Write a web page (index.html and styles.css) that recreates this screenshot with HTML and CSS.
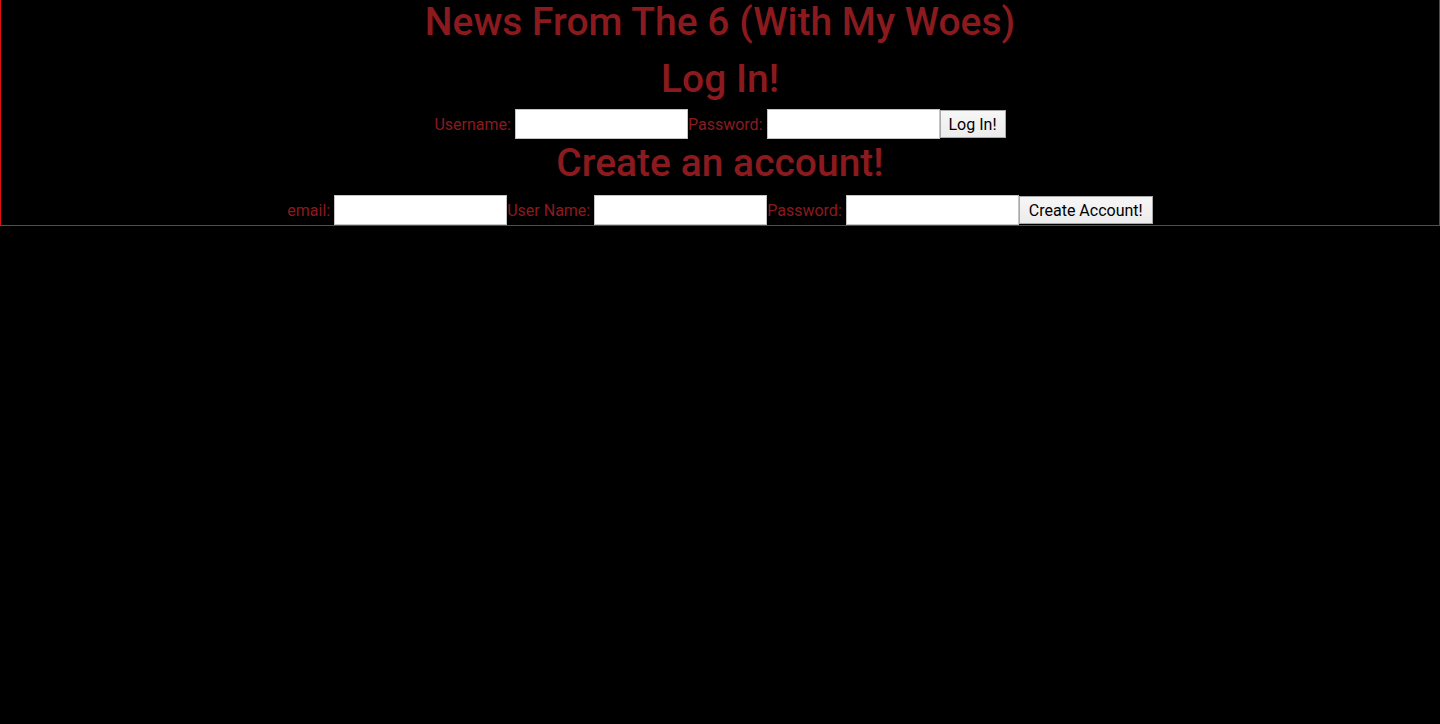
FILE: index.html
```html
<!DOCTYPE html>
<html lang="en">
<head>
<meta charset="utf-8">
<title>News From The 6 (With My Woes)</title>
<link rel="stylesheet" href="styles.css">
</head>
<body>
<div class="page">
  <h1 class="title">News From The 6 (With My Woes)</h1>
  <h2 class="heading heading-login">Log In!</h2>
  <form class="form-row row-login">
    <label class="label" for="u">Username:</label>
    <input class="field" id="u" type="text">
    <label class="label" for="p">Password:</label>
    <input class="field" id="p" type="password">
    <button class="btn" type="button">Log In!</button>
  </form>
  <h2 class="heading heading-create">Create an account!</h2>
  <form class="form-row row-create">
    <label class="label" for="e">email:</label>
    <input class="field" id="e" type="text">
    <label class="label" for="un">User Name:</label>
    <input class="field" id="un" type="text">
    <label class="label" for="pw">Password:</label>
    <input class="field" id="pw" type="password">
    <button class="btn" type="button">Create Account!</button>
  </form>
</div>
</body>
</html>
```
FILE: styles.css
```css
html, body {
  margin: 0;
  padding: 0;
  background: #000;
}
body {
  font-family: Roboto, "Liberation Sans", sans-serif;
  color: #8b1a1f;
}
.page {
  height: 225px;
  border: 1px solid #e01010;
  border-top: none;
  box-sizing: content-box;
  text-align: center;
}
.title, .heading {
  margin: 0;
  font-size: 39px;
  line-height: 44px;
  font-weight: 500;
  color: #8b1a1f;
}
.heading-login { margin-top: 13px; }
.heading-create { margin-top: 2px; }
.form-row {
  display: flex;
  justify-content: center;
  align-items: center;
  height: 30px;
  margin: 0;
}
.row-login { margin-top: 8px; }
.row-create { margin-top: 10px; }
.label {
  font-size: 16px;
  color: #8b1a1f;
  margin-right: 4px;
}
.field {
  box-sizing: border-box;
  width: 173px;
  height: 30px;
  margin: 0;
  border: 1px solid #c4c4c4;
  background: #fff;
  font-family: inherit;
  font-size: 16px;
}
.btn {
  box-sizing: border-box;
  height: 28px;
  margin: 0;
  padding: 0 8px;
  border: 1px solid #a9a9a9;
  background: linear-gradient(#f6f6f6, #ececec);
  color: #000;
  font-family: inherit;
  font-size: 16px;
}
.row-create .btn { padding: 0 9px; }
```
